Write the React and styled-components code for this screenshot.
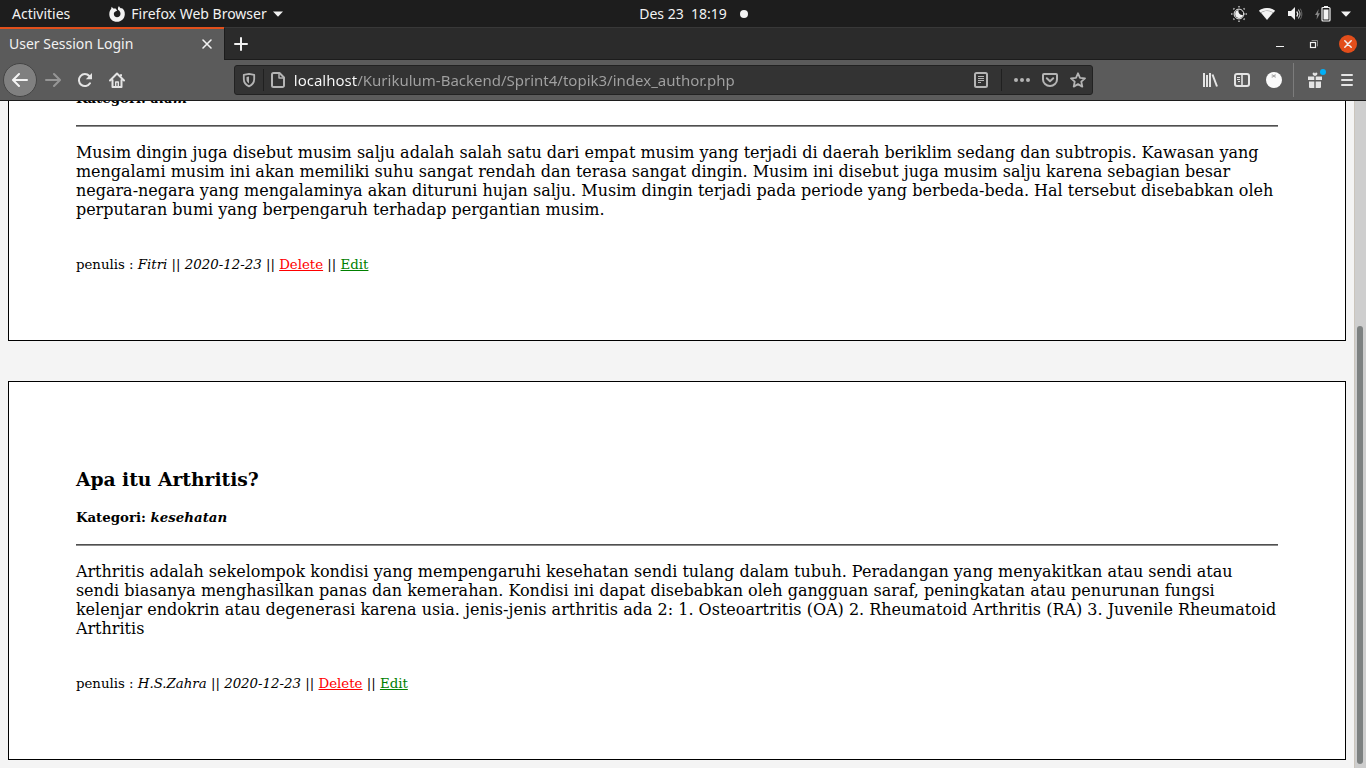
import React from "react";
import styled, { createGlobalStyle, css } from "styled-components";

const GlobalStyle = createGlobalStyle`
  *, *::before, *::after { box-sizing: border-box; }
  html, body { margin: 0; padding: 0; }
  body { background: #f4f4f4; }
  button { font: inherit; color: inherit; background: none; border: 0; padding: 0; margin: 0; }
`;

const Desktop = styled.div`
  display: flex;
  flex-direction: column;
  height: 100vh;
  overflow: hidden;
  font-family: "Noto Sans", "Open Sans", sans-serif;
  font-size: 14px;
  line-height: 20px;
`;

const SystemBar = styled.header`
  flex: none;
  display: grid;
  grid-template-columns: 1fr auto 1fr;
  align-items: center;
  height: 27px;
  padding: 0 12px;
  background: #1d1d1d;
  color: #f2f2f2;
`;

const SystemGroup = styled.div`
  display: flex;
  align-items: center;
  gap: ${(p) => p.$gap}px;
`;

const SystemButton = styled.button`
  display: flex;
  align-items: center;
  gap: 6px;
  white-space: nowrap;
`;

const StatusArea = styled.div`
  display: flex;
  align-items: center;
  justify-content: space-between;
  padding: 0 3px 0 13px;
`;

const NotificationDot = styled.span`
  width: 8px;
  height: 8px;
  border-radius: 50%;
  background: #f2f2f2;
`;

const TabStrip = styled.div`
  flex: none;
  display: flex;
  height: 33px;
  background: #2b2b2b;
  border-top: 1px solid #383838;
  border-bottom: 1px solid #1c1c1c;
  color: #f2f2f2;
`;

const Tab = styled.div`
  display: flex;
  align-items: center;
  justify-content: space-between;
  width: 224px;
  margin: -1px 0;
  padding: 0 11px 2px 9px;
  background: #5b5b5b;
  border-top: 2px solid #e2501c;
`;

const TabTitle = styled.span`
  white-space: nowrap;
`;

const TabClose = styled.button`
  display: flex;
`;

const NewTab = styled.button`
  display: flex;
  align-items: center;
  justify-content: center;
  width: 33px;
  height: 31px;
  border-left: 1px solid #1c1c1c;
`;

const WindowControls = styled.div`
  display: flex;
  align-items: center;
  margin-left: auto;
  padding-right: 1px;
`;

const WindowButton = styled.button`
  display: flex;
  align-items: center;
  justify-content: center;
  width: 34px;
  height: 32px;
`;

const NavBar = styled.nav`
  flex: none;
  display: flex;
  align-items: center;
  height: 41px;
  padding: 0 3px;
  background: #5b5b5b;
  border-bottom: 1px solid #1c1c1c;
  color: #e4e4e4;
`;

const NavButton = styled.button`
  position: relative;
  display: flex;
  align-items: center;
  justify-content: center;
  flex: none;
  width: 32px;
  height: 32px;
  ${(p) =>
    p.$round &&
    css`
      width: 34px;
      height: 34px;
      border: 1px solid #454545;
      border-radius: 50%;
      background: #808080;
      color: #f4f4f4;
    `}
  &:disabled {
    color: #969696;
  }
`;

const Badge = styled.span`
  position: absolute;
  top: 5px;
  right: 5px;
  width: 6px;
  height: 6px;
  border-radius: 50%;
  background: #00b0f8;
`;

const Spacer = styled.div`
  flex: 101 1 0;
`;

const NavDivider = styled.span`
  width: 1px;
  height: 34px;
  margin: 0 5px 0 3px;
  background: #7c7c7c;
`;

const AddressBar = styled.div`
  flex: 859 1 0;
  display: flex;
  align-items: center;
  height: 30px;
  min-width: 0;
  background: #333333;
  border: 1px solid #222222;
  border-radius: 3px;
  color: #b4b4b4;
`;

const AddressButton = styled.button`
  display: flex;
  align-items: center;
  justify-content: center;
  flex: none;
  width: 28px;
  height: 28px;
`;

const AddressDivider = styled.span`
  flex: none;
  width: 1px;
  height: 22px;
  margin: 0 ${(p) => p.$space || 0}px;
  background: #202020;
`;

const AddressInput = styled.input`
  flex: 1;
  min-width: 0;
  height: 28px;
  margin: 0;
  padding: 0 0 0 2px;
  border: 0;
  outline: 0;
  font: inherit;
  font-size: 15px;
  color: transparent;
  background: linear-gradient(90deg, #fbfbfb 65px, #a2a2a2 65px);
  background-clip: text;
  -webkit-background-clip: text;
`;

const Viewport = styled.div`
  flex: 1;
  display: flex;
  min-height: 0;
  background: #f4f4f4;
`;

const Page = styled.main`
  flex: 1;
  min-width: 0;
  display: flex;
  flex-direction: column;
  justify-content: flex-end;
  gap: 40px;
  padding: 8px;
  overflow: hidden;
  color: #000;
  font-family: "DejaVu Serif", serif;
  font-size: 16px;
  line-height: 19px;
`;

const ScrollTrack = styled.div`
  flex: none;
  display: flex;
  flex-direction: column;
  justify-content: flex-end;
  width: 12px;
  padding: 0 3px 4px 2px;
  background: #cecece;
  border-left: 1px solid #cbc5bc;
`;

const ScrollThumb = styled.div`
  height: 66%;
  border-radius: 3px;
  background: #7d8181;
`;

const Article = styled.article`
  flex: none;
  padding: 5%;
  background: #fff;
  border: 1px solid #000;
`;

const ArticleTitle = styled.h3`
  margin: 19px 0;
  line-height: 22px;
`;

const Category = styled.h5`
  margin: 0 0 18px;
  font-size: smaller;
  line-height: 17px;
`;

const Rule = styled.hr`
  height: 2px;
  margin: 0 0 16px;
  border: 0;
  border-top: 1px solid #505050;
  background: #8c8c8c;
`;

const ArticleText = styled.p`
  margin: 0 0 35px;
`;

const Byline = styled.footer`
  small {
    line-height: 15px;
  }
`;

const ActionLink = styled.a`
  color: ${(p) => p.$tone};
`;

const Svg = ({ size = 16, width = size, height = size, children }) => (
  <svg width={width} height={height} viewBox={`0 0 ${width} ${height}`} fill="none" stroke="currentColor" strokeWidth="2" strokeLinecap="round" strokeLinejoin="round" aria-hidden="true">
    {children}
  </svg>
);

const FirefoxIcon = () => (
  <Svg>
    <path
      fill="currentColor"
      stroke="none"
      d="M2.200 2.800 2.600.8 4.300 2.400 6.600 2.600 8.200 4.500 6 5.800C5 6.600 4.700 7.500 4.900 8.500 5.200 10.300 6.500 11.200 8 11.200c2 0 3.500-1.500 3.500-3.500 0-1.800-1-3-2.300-3.700C8.600 2.600 9 1.200 10 0c.3 1.300 1.200 1.800 2.200 2.600L12.800 2C15 3.500 16 5.800 15.800 8.500 15.500 12.700 12.200 15.800 8 15.800 3.700 15.800.4 12.600.3 8.400.2 6.200 1 4.200 2.200 2.800Z"
    />
  </Svg>
);

const Caret = () => (
  <Svg width={10} height={6}>
    <path d="M0 .5h10L5 5.7Z" fill="currentColor" stroke="none" />
  </Svg>
);

const NightLightIcon = () => (
  <Svg>
    <circle cx="8" cy="8" r="4.9" strokeWidth="1" />
    <path d="M7.500 4A4 4 0 1 0 12 9 4 4 0 0 1 7.500 4Z" fill="currentColor" stroke="none" />
    <path d="M8 0v1.5M8 14.5V16M0 8h1.5M14.5 8H16M2.4 2.4l1 1M12.6 12.6l1 1M2.4 13.6l1-1M12.6 3.4l1-1" strokeWidth="1.5" strokeLinecap="butt" stroke="#bdbdbd" />
  </Svg>
);

const WifiIcon = () => (
  <Svg>
    <path d="M0 4.7C4.6 1 11.4 1 16 4.7L8 14Z" fill="#8a8a8a" stroke="none" />
    <path d="M0 4.7C4.6 1 11.4 1 16 4.7L14.5 6.6C10.8 3.8 5.2 3.8 1.5 6.6Z" fill="currentColor" stroke="none" />
    <path d="M2.2 6.7C5.6 4.5 10.4 4.5 13.8 6.7L8 13.7Z" fill="currentColor" stroke="none" />
  </Svg>
);

const VolumeIcon = () => (
  <Svg>
    <path d="M1 5h3l4-4v13l-4-4H1Z" fill="currentColor" stroke="none" />
    <path d="M10 6q1.500 2 0 4" strokeWidth="1.300" />
    <path d="M11.500 4q3 4 0 8" strokeWidth="1.200" stroke="#b5b5b5" />
    <path d="M13.500 3q3 5 0 10" strokeWidth="1" stroke="#686868" />
  </Svg>
);

const BatteryIcon = () => (
  <Svg>
    <path d="M3.7 3 0 9h2l-.4 4.5L5 7.2H3Z" fill="#858585" stroke="none" />
    <path d="M9 0h4v2H9Z" fill="currentColor" stroke="none" />
    <rect x="7" y="1.500" width="8" height="13.500" rx="1" strokeWidth="1.2" />
    <path d="M8.500 3.500h5v10h-5Z" fill="currentColor" stroke="none" />
  </Svg>
);

const CloseIcon = () => (
  <Svg size={12}>
    <path d="m2 2 8 8M10 2 2 10" strokeWidth="1.6" />
  </Svg>
);

const PlusIcon = () => (
  <Svg>
    <path d="M8 2v12M2 8h12" />
  </Svg>
);

const MinimizeIcon = () => (
  <Svg>
    <path d="M4 10.5h8" strokeWidth="1" strokeLinecap="butt" />
  </Svg>
);

const RestoreIcon = () => (
  <Svg>
    <path d="M6 4.5h5.5V10" strokeWidth="1" stroke="#8b8b8b" strokeLinejoin="miter" />
    <rect x="4.5" y="6.5" width="5" height="5" strokeWidth="1.2" strokeLinejoin="miter" />
  </Svg>
);

const WindowCloseIcon = () => (
  <Svg size={18}>
    <circle cx="9" cy="9" r="9" fill="#e24e1b" stroke="none" />
    <path d="m5.8 5.8 6.4 6.4M12.2 5.8l-6.4 6.4" strokeWidth="1.5" />
  </Svg>
);

const BackIcon = () => (
  <Svg>
    <path d="M15 8H1.5M7 2 1 8l6 6" />
  </Svg>
);

const ForwardIcon = () => (
  <Svg>
    <path d="M1 8h13.5M9 2l6 6-6 6" />
  </Svg>
);

const ReloadIcon = () => (
  <Svg>
    <path d="M13 11.3A6 6 0 1 1 12.3 4" />
    <path d="M15 1v6.2H8.8Z" fill="currentColor" stroke="none" />
  </Svg>
);

const HomeIcon = () => (
  <Svg>
    <path d="m1 8.5 7-7 7 7M3.5 8v7h9V8" />
    <path d="M6.7 14.5V10h2.6v4.5" strokeWidth="1.4" />
    <path d="M12 2.2v2" strokeLinecap="butt" />
  </Svg>
);

const ShieldIcon = () => (
  <Svg>
    <path d="M8 1.8 13.200 2.800v4.200c0 3.500-1.900 5.900-5.200 7.300C4.700 12.900 2.800 10.500 2.800 7V2.800Z" strokeWidth="1.8" />
    <path d="M8 4.500v7C6.200 10.300 5.500 9 5.500 7V5Z" fill="currentColor" stroke="none" />
  </Svg>
);

const PageIcon = () => (
  <Svg>
    <path d="M9.500 1H3.500a1.500 1.500 0 0 0-1.500 1.500v11A1.500 1.500 0 0 0 3.500 15h9a1.500 1.500 0 0 0 1.500-1.500v-8Z" />
    <path d="M9 1.500V6h4.500" strokeWidth="1.500" />
  </Svg>
);

const ReaderIcon = () => (
  <Svg>
    <rect x="2" y="1" width="12" height="14" rx="1.500" />
    <path d="M5 4.500h6M5 6.500h6M5 8.500h6M5 10.500h3" strokeWidth="1" strokeLinecap="butt" />
  </Svg>
);

const DotsIcon = () => (
  <Svg>
    <g fill="currentColor" stroke="none">
      <circle cx="2" cy="8" r="2" />
      <circle cx="8" cy="8" r="2" />
      <circle cx="14" cy="8" r="2" />
    </g>
  </Svg>
);

const PocketIcon = () => (
  <Svg>
    <path d="M2 2h12a1 1 0 0 1 1 1v4.500a7 6.500 0 0 1-14 0V3a1 1 0 0 1 1-1Z" />
    <path d="m4.800 6.300 3.200 3 3.200-3" />
  </Svg>
);

const StarIcon = () => (
  <Svg>
    <path d="m8 1.300 2 4.500 5 .6-3.700 3.300 1 4.900L8 12.100l-4.300 2.500 1-4.900L1 6.400l5-.6Z" strokeWidth="1.800" />
  </Svg>
);

const LibraryIcon = () => (
  <Svg>
    <path d="M2 1v14M5 3v12M8 1v14M10.500 2.500 15 14.500" strokeLinecap="butt" />
  </Svg>
);

const SidebarIcon = () => (
  <Svg>
    <rect x="1" y="2" width="14" height="12" rx="2" />
    <path d="M8 2v12" strokeWidth="1.600" />
    <path d="M3 5.500h3M3 7.500h3M4 9.500h2" strokeWidth="1" strokeLinecap="butt" />
  </Svg>
);

const AccountIcon = () => (
  <Svg>
    <circle cx="8" cy="8" r="8" fill="#fafafa" stroke="none" />
    <path d="m6.200 2.500 3 3m0-3-3 3M6 4h3.500" strokeWidth=".7" stroke="#8a8a8a" />
  </Svg>
);

const GiftIcon = () => (
  <Svg>
    <path d="M1 4.500h6.300V8H1ZM8.700 4.500H15V8H8.700ZM2 9.500h5.300V16H3a1 1 0 0 1-1-1ZM8.700 9.500H14V15a1 1 0 0 1-1 1H8.700ZM8 4C6 3.400 5.200 2 5.800 1 6.400.1 7.700.4 8 1.400 8.300.4 9.600.1 10.200 1 10.800 2 10 3.400 8 4Z" fill="currentColor" stroke="none" />
  </Svg>
);

const MenuIcon = () => (
  <Svg>
    <path d="M3 3h10M3 8h10M3 13h10" />
  </Svg>
);

const articles = [
  {
    category: "alam",
    text: "Musim dingin juga disebut musim salju adalah salah satu dari empat musim yang terjadi di daerah beriklim sedang dan subtropis. Kawasan yang mengalami musim ini akan memiliki suhu sangat rendah dan terasa sangat dingin. Musim ini disebut juga musim salju karena sebagian besar negara-negara yang mengalaminya akan dituruni hujan salju. Musim dingin terjadi pada periode yang berbeda-beda. Hal tersebut disebabkan oleh perputaran bumi yang berpengaruh terhadap pergantian musim.",
    author: "Fitri",
    date: "2020-12-23",
  },
  {
    title: "Apa itu Arthritis?",
    category: "kesehatan",
    text: "Arthritis adalah sekelompok kondisi yang mempengaruhi kesehatan sendi tulang dalam tubuh. Peradangan yang menyakitkan atau sendi atau sendi biasanya menghasilkan panas dan kemerahan. Kondisi ini dapat disebabkan oleh gangguan saraf, peningkatan atau penurunan fungsi kelenjar endokrin atau degenerasi karena usia. jenis-jenis arthritis ada 2: 1. Osteoartritis (OA) 2. Rheumatoid Arthritis (RA) 3. Juvenile Rheumatoid Arthritis",
    author: "H.S.Zahra",
    date: "2020-12-23",
  },
];

export default function App() {
  return (
    <Desktop>
      <GlobalStyle />
      <SystemBar>
        <SystemGroup $gap={39}>
          <SystemButton>Activities</SystemButton>
          <SystemButton>
            <FirefoxIcon />
            Firefox Web Browser
            <Caret />
          </SystemButton>
        </SystemGroup>
        <SystemButton>Des 23&nbsp; 18:19</SystemButton>
        <StatusArea>
          <NotificationDot />
          <SystemGroup $gap={12}>
            <NightLightIcon />
            <WifiIcon />
            <VolumeIcon />
            <SystemGroup $gap={10}>
              <BatteryIcon />
              <Caret />
            </SystemGroup>
          </SystemGroup>
        </StatusArea>
      </SystemBar>

      <TabStrip>
        <Tab>
          <TabTitle>User Session Login</TabTitle>
          <TabClose aria-label="Close tab"><CloseIcon /></TabClose>
        </Tab>
        <NewTab aria-label="New tab"><PlusIcon /></NewTab>
        <WindowControls>
          <WindowButton aria-label="Minimize"><MinimizeIcon /></WindowButton>
          <WindowButton aria-label="Restore"><RestoreIcon /></WindowButton>
          <WindowButton aria-label="Close window"><WindowCloseIcon /></WindowButton>
        </WindowControls>
      </TabStrip>

      <NavBar>
        <NavButton $round aria-label="Back"><BackIcon /></NavButton>
        <NavButton disabled aria-label="Forward"><ForwardIcon /></NavButton>
        <NavButton aria-label="Reload"><ReloadIcon /></NavButton>
        <NavButton aria-label="Home"><HomeIcon /></NavButton>
        <Spacer />
        <AddressBar>
          <AddressButton aria-label="Tracking protection"><ShieldIcon /></AddressButton>
          <AddressDivider />
          <AddressButton aria-label="Site information"><PageIcon /></AddressButton>
          <AddressInput
            aria-label="Address"
            defaultValue="localhost/Kurikulum-Backend/Sprint4/topik3/index_author.php"
          />
          <AddressButton aria-label="Reader view"><ReaderIcon /></AddressButton>
          <AddressDivider $space={6} />
          <AddressButton aria-label="Page actions"><DotsIcon /></AddressButton>
          <AddressButton aria-label="Save to Pocket"><PocketIcon /></AddressButton>
          <AddressButton aria-label="Bookmark"><StarIcon /></AddressButton>
        </AddressBar>
        <Spacer />
        <NavButton aria-label="Library"><LibraryIcon /></NavButton>
        <NavButton aria-label="Sidebars"><SidebarIcon /></NavButton>
        <NavButton aria-label="Account"><AccountIcon /></NavButton>
        <NavDivider />
        <NavButton aria-label="What's new"><GiftIcon /><Badge /></NavButton>
        <NavButton aria-label="Menu"><MenuIcon /></NavButton>
      </NavBar>

      <Viewport>
        <Page>
          {articles.map((a) => (
            <Article key={a.category}>
              {a.title && <ArticleTitle>{a.title}</ArticleTitle>}
              <Category>Kategori: <i>{a.category}</i></Category>
              <Rule />
              <ArticleText>{a.text}</ArticleText>
              <Byline>
                <small>
                  penulis : <i>{a.author}</i> || <i>{a.date}</i> ||{" "}
                  <ActionLink href="#delete" $tone="#ff0000">Delete</ActionLink> ||{" "}
                  <ActionLink href="#edit" $tone="#008000">Edit</ActionLink>
                </small>
              </Byline>
            </Article>
          ))}
        </Page>
        <ScrollTrack><ScrollThumb /></ScrollTrack>
      </Viewport>
    </Desktop>
  );
}
